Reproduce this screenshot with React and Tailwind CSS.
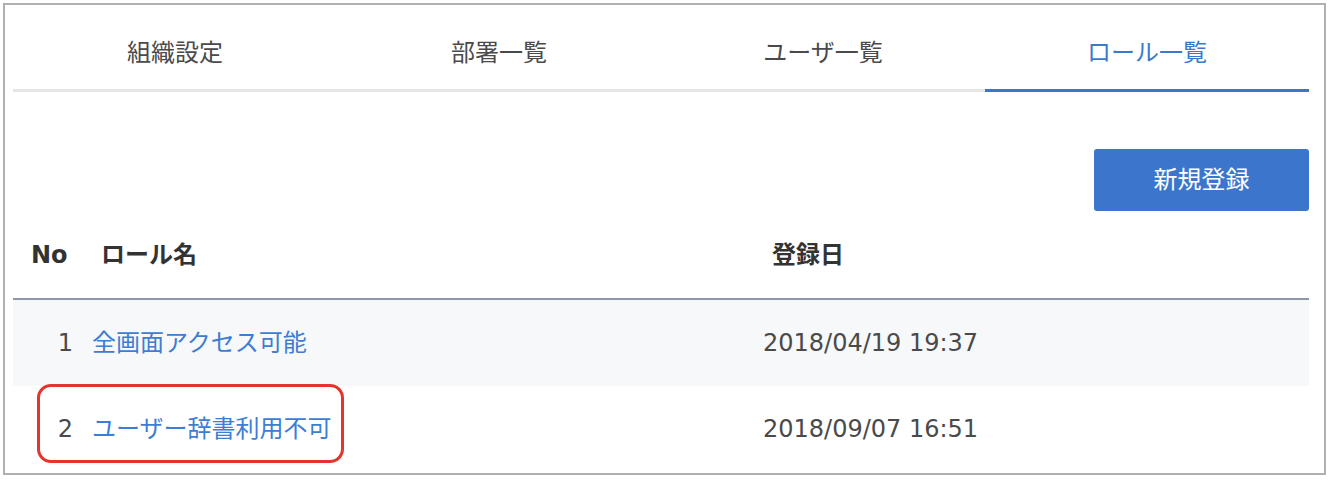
const FONT = { fontFamily: '"DejaVu Sans", "Noto Sans CJK JP", sans-serif' };

const TABS = ["組織設定", "部署一覧", "ユーザ一覧", "ロール一覧"];

const ROLES = [
  { no: 1, name: "全画面アクセス可能", date: "2018/04/19 19:37" },
  { no: 2, name: "ユーザー辞書利用不可", date: "2018/09/07 16:51" },
];

export default function App() {
  const active = 3;

  return (
    <div className="bg-white w-[1330px] h-[480px] pt-[3px] pl-[3px]" style={FONT}>
      <div className="w-[1323px] h-[472px] border-2 border-[#b0b0b0] pl-2 pr-[15px] overflow-hidden">
        {/* タブ */}
        <div className="grid grid-cols-4">
          {TABS.map((t, i) => (
            <div
              key={t}
              className={
                "text-center text-[24px] leading-[36px] pt-[30px] pb-[18px] border-b-[3px] " +
                (i === active ? "text-[#3b79cc] border-[#3b76cc]" : "text-[#4a4a4a] border-[#e6e6e6]")
              }
            >
              {t}
            </div>
          ))}
        </div>

        {/* 新規登録 */}
        <div className="flex justify-end pt-[57px]">
          <button className="w-[215px] h-[62px] bg-[#3b76cc] text-white text-[24px] rounded-[3px]">
            新規登録
          </button>
        </div>

        {/* 一覧 */}
        <div className="relative">
          <div className="grid grid-cols-[70px_671px_1fr] h-[89px] items-center border-b-2 border-[#8e97a8] text-[24px] font-bold text-[#333]">
            <div className="pl-[18px]">No</div>
            <div className="pl-[18px]">ロール名</div>
            <div className="pl-[18px]">登録日</div>
          </div>
          {ROLES.map((r, i) => (
            <div
              key={r.no}
              className={
                "grid grid-cols-[70px_671px_1fr] h-[86px] items-center text-[24px] text-[#4a4a4a] " +
                (i % 2 === 0 ? "bg-[#f6f8fa]" : "bg-white")
              }
            >
              <div className="text-right pr-[10px]">{r.no}</div>
              <div className="pl-[9px] text-[#3d7dd2]">{r.name}</div>
              <div className="pl-[9px]">{r.date}</div>
            </div>
          ))}
          {/* 注釈の赤枠 */}
          <div className="absolute left-[24px] top-[173px] w-[307px] h-[79px] border-[3px] border-[#e3352b] rounded-[14px] pointer-events-none" />
        </div>
      </div>
    </div>
  );
}
